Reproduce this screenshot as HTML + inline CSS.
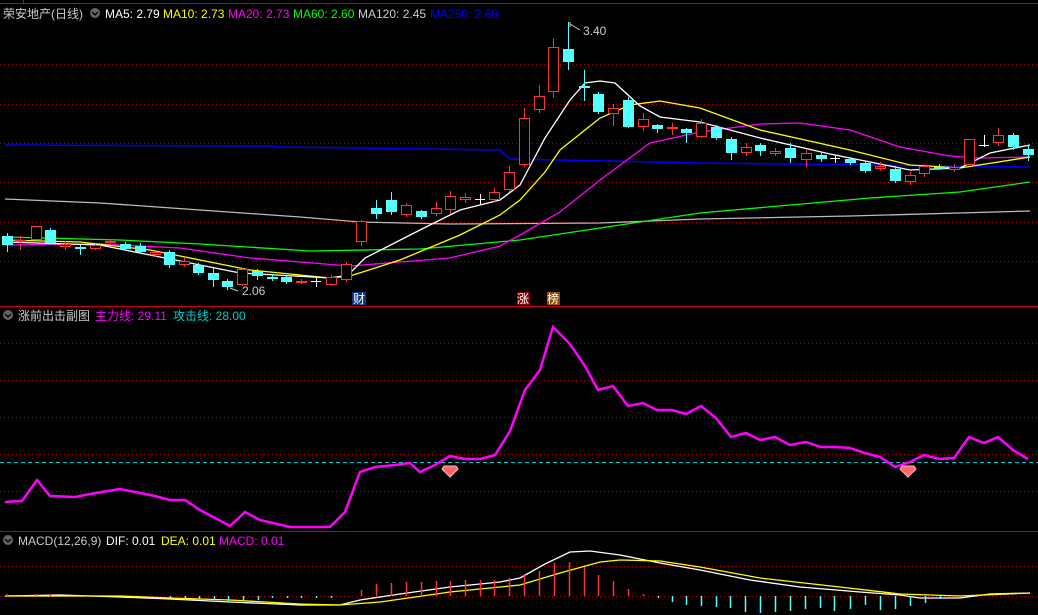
<!DOCTYPE html>
<html><head><meta charset="utf-8"><style>
html,body{margin:0;padding:0;background:#000;}
svg{display:block}
text{font-family:"Liberation Sans","Noto Sans CJK SC",sans-serif;font-size:12px}
</style></head><body>
<svg id="s" width="1038" height="615" xmlns="http://www.w3.org/2000/svg">
<rect width="1038" height="615" fill="#000"/>
<g stroke="#a00" stroke-width="1" stroke-dasharray="1,3">
<line x1="0" y1="64.5" x2="1038" y2="64.5"/><line x1="0" y1="104.5" x2="1038" y2="104.5"/><line x1="0" y1="143.5" x2="1038" y2="143.5"/><line x1="0" y1="182.5" x2="1038" y2="182.5"/><line x1="0" y1="222.5" x2="1038" y2="222.5"/><line x1="0" y1="261.5" x2="1038" y2="261.5"/>
<line x1="0" y1="343.5" x2="1038" y2="343.5"/><line x1="0" y1="380.5" x2="1038" y2="380.5"/><line x1="0" y1="417.5" x2="1038" y2="417.5"/><line x1="0" y1="454.5" x2="1038" y2="454.5"/><line x1="0" y1="491.5" x2="1038" y2="491.5"/>
<line x1="0" y1="566.5" x2="1038" y2="566.5"/><line x1="0" y1="596.5" x2="1038" y2="596.5"/>
</g>
<line x1="0" y1="3.5" x2="1038" y2="3.5" stroke="#c00"/><line x1="23.5" y1="0" x2="23.5" y2="3" stroke="#c00"/>
<line x1="0" y1="306.5" x2="1038" y2="306.5" stroke="#c00"/>
<line x1="0" y1="531.5" x2="1038" y2="531.5" stroke="#c00"/>
<line x1="0" y1="462.5" x2="1038" y2="462.5" stroke="#0cc" stroke-dasharray="4,3"/>
<g id="ma" fill="none" stroke-width="1.3"></g>
<g id="cd"></g>
<g id="mc"></g>
<text x="242" y="295" fill="#ccc">2.06</text>
<path d="M238 291 L230 288" stroke="#ccc" fill="none"/>
<text x="583" y="35" fill="#ccc">3.40</text>
<path d="M570 22 L570 27 M570 24 L580 30" stroke="#ccc" fill="none"/>
<rect x="352" y="292" width="14" height="13" fill="#0a3a7a"/><text x="353" y="303" fill="#fff">财</text>
<rect x="517" y="292" width="13" height="13" fill="#800"/><text x="517" y="303" fill="#fff">涨</text>
<rect x="547" y="292" width="13" height="13" fill="#8a4a00"/><text x="547" y="303" fill="#fff">榜</text>
<g><path d="M444 466 L456 466 L458 469 L450 477 L442 469Z" fill="#f66" stroke="#fbb"/><path d="M902 466 L914 466 L916 469 L908 477 L900 469Z" fill="#f66" stroke="#fbb"/></g>
<circle cx="95" cy="13" r="5" fill="#666"/><path d="M92 12 L95 15 L98 12" stroke="#000" fill="none" stroke-width="1.3"/>
<text x="3" y="18" fill="#ccc">荣安地产(日线)</text>
<text x="105" y="18" fill="#fff">MA5: 2.79</text>
<text x="163" y="18" fill="#ff0">MA10: 2.73</text>
<text x="228" y="18" fill="#f0f">MA20: 2.73</text>
<text x="293" y="18" fill="#0f0">MA60: 2.60</text>
<text x="358" y="18" fill="#ccc">MA120: 2.45</text>
<text x="430" y="18" fill="#00f">MA250: 2.68</text>
<circle cx="8" cy="315" r="5" fill="#666"/><path d="M5 314 L8 317 L11 314" stroke="#000" fill="none" stroke-width="1.3"/>
<text x="18" y="320" fill="#ccc">涨前出击副图</text>
<text x="95" y="320" fill="#f0f">主力线: 29.11</text>
<text x="173" y="320" fill="#0cc">攻击线: 28.00</text>
<circle cx="8" cy="540" r="5" fill="#666"/><path d="M5 539 L8 542 L11 539" stroke="#000" fill="none" stroke-width="1.3"/>
<text x="18" y="545" fill="#ccc">MACD(12,26,9)</text>
<text x="106" y="545" fill="#fff">DIF: 0.01</text>
<text x="161" y="545" fill="#ff0">DEA: 0.01</text>
<text x="219" y="545" fill="#f0f">MACD: 0.01</text>
</svg>
<script>
var NS="http://www.w3.org/2000/svg";
function pl(g,pts,c,w,extra){var p=document.createElementNS(NS,"polyline");p.setAttribute("points",pts);p.setAttribute("stroke",c);p.setAttribute("fill","none");p.setAttribute("stroke-width",w||1.3);document.getElementById(g).appendChild(p);}
pl("ma","5,145 270,146 280,147 500,150 510,159 700,163 1030,167","#00f",1.5);
pl("ma","5,199 100,203 200,210 300,217 360,222 450,224 600,223 700,219 850,216 1030,211","#bbb");
pl("ma","5,237 120,240 200,244 310,251 420,249 520,240 600,228 700,213 870,198 960,192 1030,182","#0f0");
pl("ma","5,245 100,244 180,248 250,258 350,266 450,258 500,246 520,235 560,212 600,180 650,143 700,132 760,124 800,123 850,130 900,147 950,156 980,158 1030,157","#f0f");
pl("ma","5,240 80,242 150,250 250,270 330,278 350,276 400,260 460,235 500,215 520,200 545,172 560,150 600,118 630,105 660,101 700,108 760,130 850,150 910,165 960,168 1030,157","#ff0");
pl("ma","5,242 100,245 200,265 240,273 330,278 348,275 365,258 420,230 460,210 500,200 520,185 545,138 570,100 585,83 600,81 615,83 640,106 660,117 700,122 760,138 830,154 880,164 910,170 960,168 990,153 1030,145","#fff");
pl("ma","5,502 22,501 37,480 50,496 75,497 90,494 120,489 135,492 155,496 170,500 185,500 200,510 215,518 230,526 245,512 260,520 290,527 330,527 345,512 360,472 375,467 395,465 410,463 420,472 435,465 450,456 465,459 480,459 495,455 510,431 525,390 540,370 553,327 570,344 585,366 598,390 613,386 628,406 643,403 657,410 672,410 686,414 701,406 716,418 731,437 746,433 760,440 775,437 790,445 806,442 821,447 835,447 850,448 865,453 880,457 895,467 910,462 924,455 939,459 954,458 969,437 984,443 998,437 1013,450 1028,459","#f0f",2.5);
pl("ma","5,596 60,595 120,597 170,599 230,602 300,605 340,605 360,600 400,594 450,587 500,582 520,578 545,564 570,552 590,551 620,555 660,563 700,570 750,580 800,587 860,592 900,595 920,598 960,598 990,594 1030,593","#fff");
pl("ma","5,596 120,596 170,598 230,600 300,604 340,605 380,602 450,592 520,585 560,573 600,562 620,560 660,561 700,567 760,578 840,587 900,594 960,596 1030,593","#ff0");
// candles: x, open, close, high, low  (y coords); red if close<open (rising)
var C=[[7,236,245,233,252],[20,242,240,236,250],[36,240,226,226,240],[50,230,243,228,245],[65,247,244,241,250],[80,247,248,245,255],[95,249,245,244,250],[110,242,241,239,245],[125,244,249,242,251],[140,246,252,243,254],[155,255,252,250,257],[169,252,265,250,268],[184,265,261,258,267],[198,265,273,263,275],[213,273,280,268,287],[227,281,287,279,290],[242,285,269,268,286],[257,271,276,269,280],[272,277,278,274,281],[286,277,282,275,284],[301,283,281,279,284],[316,281,281,277,287],[331,285,277,275,286],[346,280,264,262,282],[361,242,221,220,246],[376,208,214,200,219],[391,200,212,192,215],[406,215,205,203,217],[421,211,217,210,219],[436,214,208,202,216],[450,210,196,191,214],[465,200,197,193,203],[480,199,199,194,204],[494,200,192,188,202],[509,190,172,166,192],[524,165,118,108,167],[539,110,96,85,113],[553,92,47,38,98],[568,49,62,22,70],[584,86,87,70,101],[598,94,112,92,114],[613,114,108,104,126],[628,100,127,97,128],[643,127,119,113,131],[657,125,129,124,133],[672,129,127,123,135],[686,129,133,128,143],[701,137,123,119,138],[716,127,138,125,140],[731,139,153,137,160],[746,153,147,143,156],[760,145,151,143,156],[775,154,151,148,156],[790,148,158,143,163],[806,160,153,150,167],[821,155,159,153,162],[835,158,158,155,163],[850,159,163,157,165],[865,163,171,162,173],[880,169,166,162,171],[895,169,181,166,183],[910,182,175,172,185],[924,174,166,164,177],[939,167,168,164,170],[954,170,167,164,172],[969,165,139,139,165],[984,145,145,135,147],[998,143,135,128,146],[1013,135,147,133,150],[1028,149,155,145,161]];
var g=document.getElementById("cd"),h="";
C.forEach(function(c){var x=c[0],o=c[1],cl=c[2],red=cl<o,top=Math.min(o,cl),bot=Math.max(o,cl),col;
 if(o==cl){h+='<line x1="'+(x-5)+'" y1="'+(o+.5)+'" x2="'+(x+5)+'" y2="'+(o+.5)+'" stroke="#fff"/><line x1="'+(x+.5)+'" y1="'+c[3]+'" x2="'+(x+.5)+'" y2="'+c[4]+'" stroke="#fff"/>';return;}
 if(red){col="#f33";h+='<line x1="'+(x+.5)+'" y1="'+c[3]+'" x2="'+(x+.5)+'" y2="'+top+'" stroke="'+col+'"/><line x1="'+(x+.5)+'" y1="'+bot+'" x2="'+(x+.5)+'" y2="'+c[4]+'" stroke="'+col+'"/><rect x="'+(x-4.5)+'" y="'+(top+.5)+'" width="10" height="'+Math.max(1,bot-top-1)+'" fill="#000" stroke="'+col+'"/>';}
 else{col="#54ffff";h+='<line x1="'+(x+.5)+'" y1="'+c[3]+'" x2="'+(x+.5)+'" y2="'+c[4]+'" stroke="'+col+'"/><rect x="'+(x-5)+'" y="'+top+'" width="11" height="'+Math.max(2,bot-top)+'" fill="'+col+'"/>';}
});
g.innerHTML=h;
var B=[[7,594],[36,594],[50,594],[170,598],[185,598],[199,599],[214,600],[228,601],[243,600],[258,600],[272,598],[287,598],[301,598],[316,598],[331,598],[361,590],[376,584],[391,583],[406,582],[421,582],[436,581],[450,581],[465,580],[480,580],[494,580],[509,578],[524,574],[539,571],[554,563],[569,562],[584,567],[598,575],[613,581],[628,589],[643,594],[658,598],[672,602],[686,605],[701,606],[716,607],[730,608],[745,612],[760,613],[775,612],[790,611],[805,609],[820,608],[834,611],[850,609],[865,605],[880,610],[895,609],[910,606],[925,603],[940,599]],m="";
B.forEach(function(b){var c=b[1]<596?"#f33":"#54ffff";m+='<line x1="'+(b[0]+.5)+'" y1="596" x2="'+(b[0]+.5)+'" y2="'+b[1]+'" stroke="'+c+'" stroke-width="1.5"/>';});
document.getElementById("mc").innerHTML=m;
</script>
</body></html>
